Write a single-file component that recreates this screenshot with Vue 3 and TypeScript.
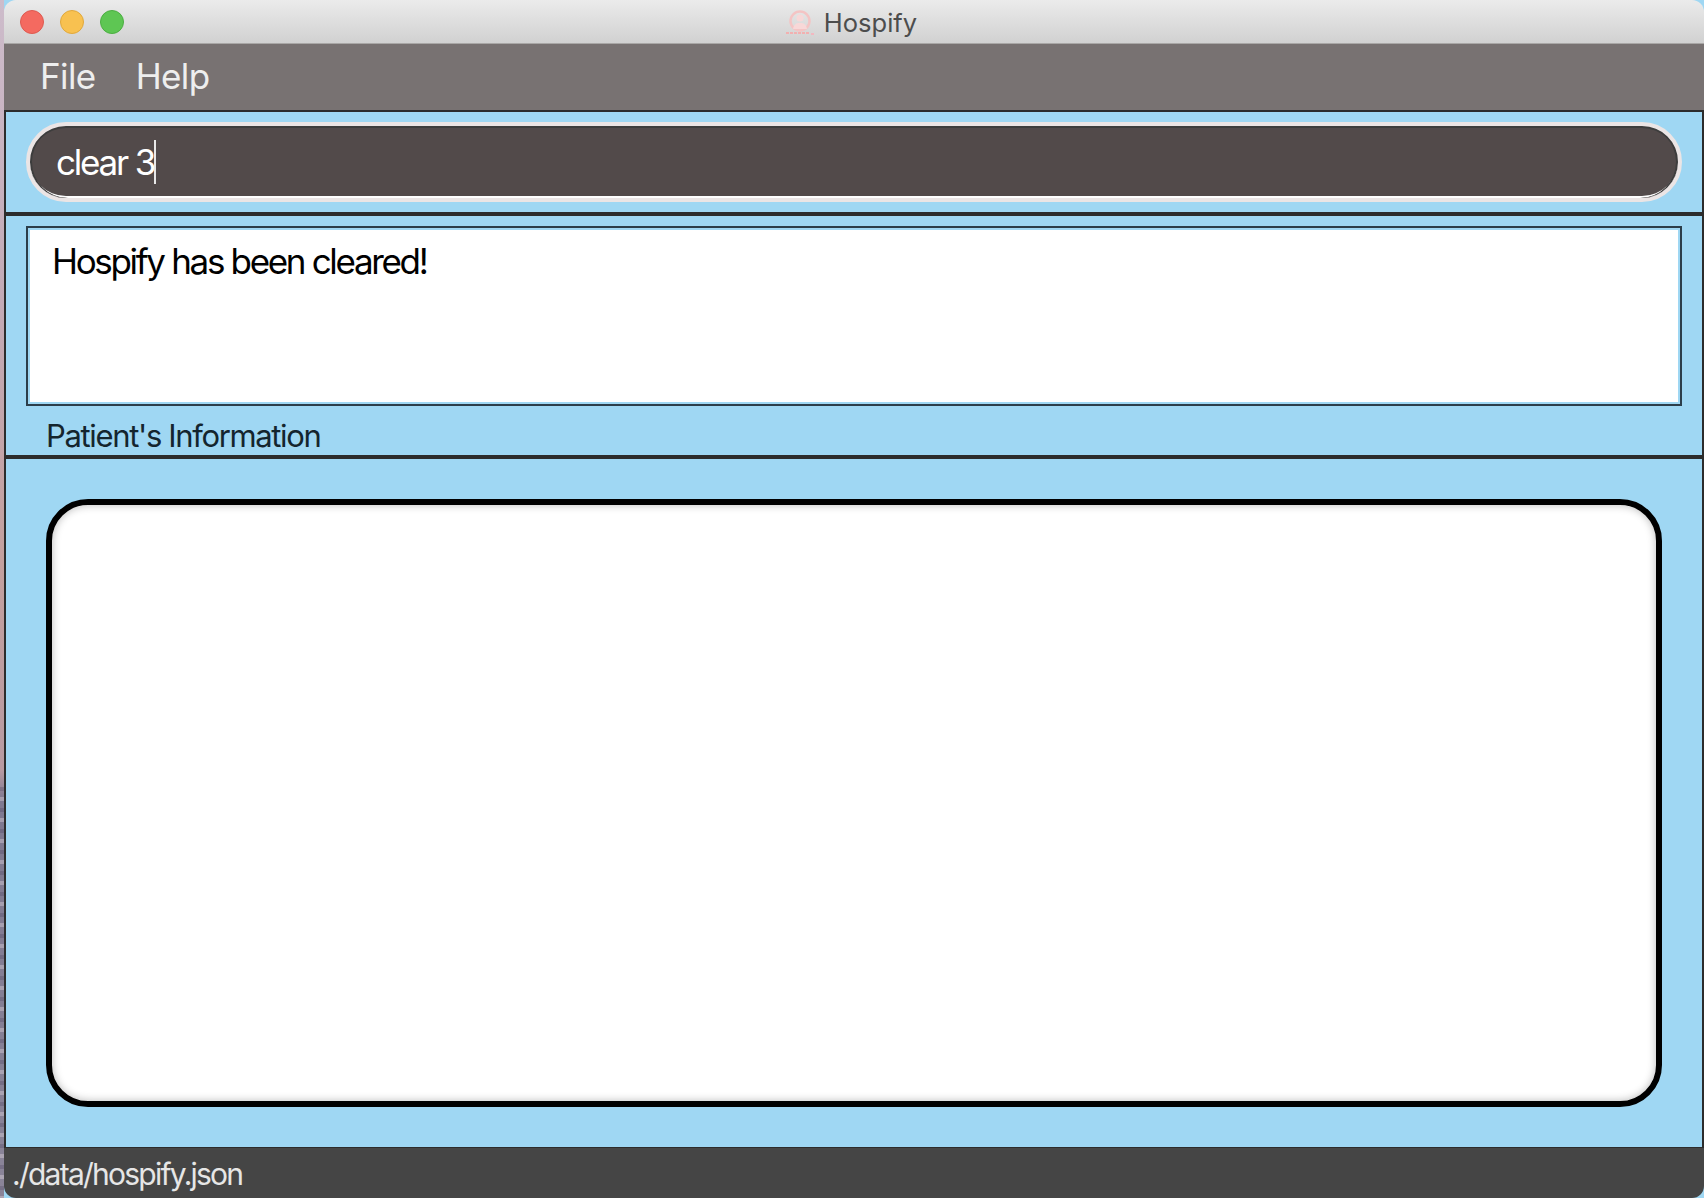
<script setup lang="ts">
const menus: string[] = ['File', 'Help']
</script>

<template>
  <div class="page">
    <div class="window">
      <header class="titlebar">
        <div class="lights">
          <span class="light red"></span>
          <span class="light yellow"></span>
          <span class="light green"></span>
        </div>
        <div class="title">
          <svg class="logo" width="30" height="26" viewBox="0 0 30 26">
            <circle cx="15" cy="11" r="9.5" fill="none" stroke="#f4c4c4" stroke-width="2.5" />
            <circle cx="15" cy="8" r="3.6" fill="#f8d8d8" />
            <path d="M8 19c1-5 3-6 7-6s6 1 7 6z" fill="#f8d8d8" />
            <path d="M1 23h24" fill="none" stroke="#f2b0b0" stroke-width="2" stroke-dasharray="3 1" />
            <path d="M26 24h3" fill="none" stroke="#f2b8c0" stroke-width="2" />
          </svg>
          <span>Hospify</span>
        </div>
      </header>

      <nav class="menubar">
        <span v-for="m in menus" :key="m" class="menu">{{ m }}</span>
      </nav>

      <main class="content">
        <section class="command">
          <div class="input">
            <span>clear 3</span><i class="caret"></i>
          </div>
        </section>

        <section class="result">
          <div class="result-box">Hospify has been cleared!</div>
          <div class="label">Patient's Information</div>
        </section>

        <section class="list">
          <div class="card"></div>
        </section>
      </main>

      <footer class="status">./data/hospify.json</footer>
    </div>
  </div>
</template>

<style>
html, body { margin: 0; padding: 0; background: #a6c8e4; overflow: hidden; }
</style>

<style scoped>
.page {
  width: 1704px;
  height: 1198px;
  padding-left: 4px;
  box-sizing: border-box;
  display: flex;
  background:
    repeating-linear-gradient(180deg, transparent 0 7px, rgba(70, 60, 90, .28) 7px 11px, transparent 11px 17px, rgba(235, 225, 230, .35) 17px 21px) 0 780px / 4px 418px no-repeat,
    linear-gradient(180deg, #cdbccb 0, #c3aab6 300px, #c4a09e 560px, #b89aa2 770px, #7f7890 800px, #8a8498 1198px) 0 0 / 4px 100% no-repeat,
    #9fd7f3;
}
.window {
  flex: 1;
  min-width: 0;
  display: flex;
  flex-direction: column;
  border-radius: 12px;
  overflow: hidden;
  font-family: Inter, "Liberation Sans", sans-serif;
}
.titlebar {
  height: 44px;
  flex: none;
  box-sizing: border-box;
  position: relative;
  display: flex;
  align-items: center;
  justify-content: center;
  background: linear-gradient(180deg, #ebebeb 0, #d1d1d1 100%);
  border-bottom: 1px solid #a9a7a6;
}
.lights {
  position: absolute;
  left: 16px;
  top: 10px;
  display: flex;
  gap: 16px;
}
.light {
  width: 24px;
  height: 24px;
  box-sizing: border-box;
  border-radius: 50%;
  border: 1px solid transparent;
}
.red { background: #f46a60; border-color: #dd5a50; }
.yellow { background: #f8c150; border-color: #e0a83c; }
.green { background: #5ec653; border-color: #4cae42; }
.title {
  display: flex;
  align-items: center;
  gap: 9px;
  margin-left: -6px;
  padding-top: 1px;
  font-size: 25.5px;
  color: #4d4d4d;
}
.logo { display: block; margin-top: 1px; }
.menubar {
  height: 66px;
  flex: none;
  box-sizing: border-box;
  padding: 0 0 2px 36px;
  display: flex;
  align-items: center;
  gap: 40px;
  background: #787272;
  color: #eeeeee;
  font-size: 35px;
  letter-spacing: -0.6px;
}
.content {
  flex: 1;
  min-height: 0;
  display: flex;
  flex-direction: column;
  background: #9fd7f3;
  border: solid #2c2c2c;
  border-width: 2px 2px 1px 2px;
}
.command {
  height: 104px;
  flex: none;
  box-sizing: border-box;
  padding: 10px 20px 10px 20px;
  border-bottom: 4px solid #2c2c2c;
}
.input {
  height: 80px;
  box-sizing: border-box;
  border-radius: 40px;
  background: #524a4a;
  border: 4px solid #ebe5e5;
  box-shadow: inset 0 2px 0 #3d3d3d, inset 2px 0 0 #3d3d3d, inset -2px 0 0 #3d3d3d, inset 0 -2px 0 #ffffff;
  display: flex;
  align-items: center;
  padding-left: 26px;
  color: #ffffff;
  font-size: 35px;
  letter-spacing: -2.2px;
}
.caret {
  display: block;
  width: 2px;
  height: 44px;
  margin-left: 0;
  background: #e8e8e8;
}
.result {
  height: 243px;
  flex: none;
  box-sizing: border-box;
  padding: 10px 20px 0 20px;
  border-bottom: 4px solid #2c2c2c;
}
.result-box {
  height: 180px;
  box-sizing: border-box;
  border: 2px solid #2c3e4a;
  background: #fff;
  box-shadow: inset 0 0 0 2px #9fd7f3;
  padding: 10px 0 0 24px;
  color: #000;
  font-size: 35px;
  line-height: 46px;
  letter-spacing: -2.33px;
}
.label {
  padding: 10px 0 0 20px;
  color: #14252e;
  font-size: 31px;
  line-height: 40px;
  letter-spacing: -1.35px;
}
.list {
  flex: 1;
  min-height: 0;
  box-sizing: border-box;
  padding: 40px 40px 40px 40px;
  display: flex;
}
.card {
  flex: 1;
  box-sizing: border-box;
  border: 6px solid #000;
  border-radius: 42px;
  background: #fff;
  box-shadow: inset 0 0 8px rgba(0, 0, 0, .28);
}
.status {
  height: 50px;
  flex: none;
  box-sizing: border-box;
  padding: 2px 0 0 8px;
  display: flex;
  align-items: center;
  background: #454545;
  color: #e6e6e6;
  font-size: 30px;
  letter-spacing: -1.75px;
}
</style>
